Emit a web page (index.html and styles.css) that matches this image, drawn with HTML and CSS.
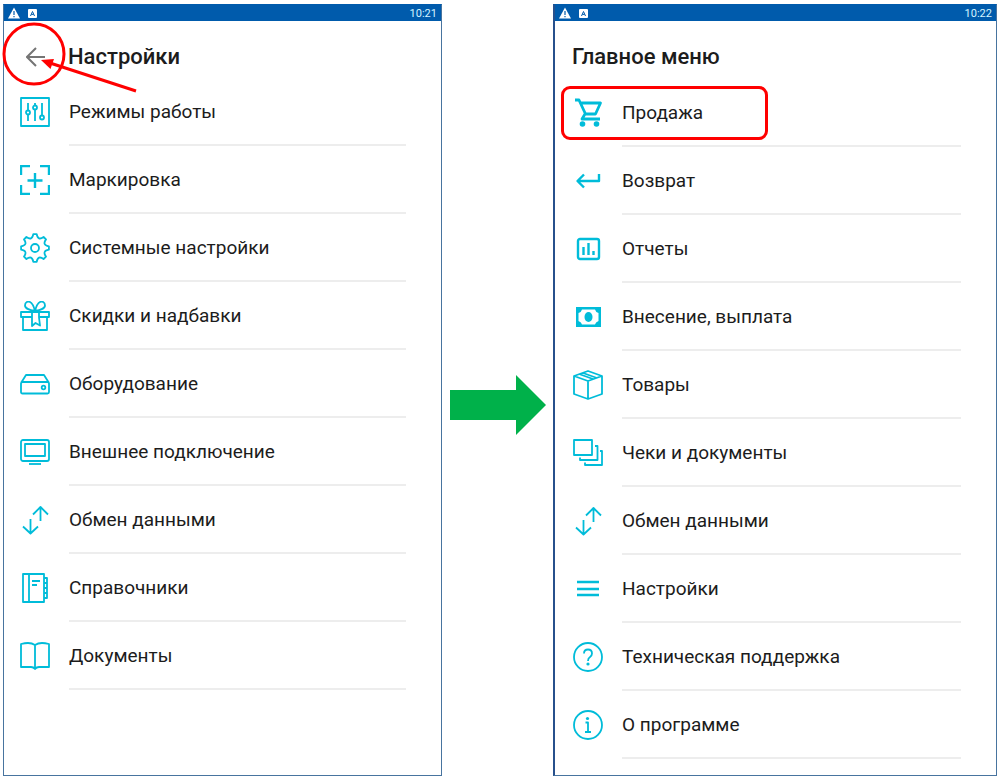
FILE: index.html
```html
<!doctype html>
<html lang="ru">
<head>
    <meta charset="UTF-8">
    <meta name="viewport" content="width=device-width, initial-scale=1.0">
    <title>Настройки - Главное меню</title>
    <link rel="stylesheet" href="styles.css">
</head>
<body>
<main class="steps">
    <section class="screen">
        <div class="statusbar">
            <svg class="warn" viewBox="0 0 12 12"><path d="M6 0.5L12 11.5H0z" fill="#fff"/><path d="M6 4v4M6 9v1.2" stroke="#005bac" stroke-width="1.2"/></svg>
            <svg class="app" viewBox="0 0 9 9"><rect width="9" height="9" rx="1" fill="#fff"/><path d="M2.5 7L4.5 2.5L6.5 7M3.3 5.4h2.4" fill="none" stroke="#005bac"/></svg>
            <time>10:21</time>
        </div>
        <header class="header">
            <button class="back" type="button" aria-label="Назад">
                <svg viewBox="0 0 20 20"><path d="M19 10H1.5M10 1L1 10l9 9" fill="none" stroke="#757575" stroke-width="2"/></svg>
            </button>
            <h1>Настройки</h1>
            <svg class="pointer" viewBox="0 0 140 70">
                <circle cx="34" cy="33" r="30" fill="none" stroke="#f00" stroke-width="3"/>
                <path d="M136 70L50 42" stroke="#f00" stroke-width="3"/>
                <path d="M41 39l13-1-3.5 10z" fill="#f00"/>
            </svg>
        </header>
        <ul class="menu">
            <li><a href="#modes">
                <svg class="icon" viewBox="0 0 30 30"><path d="M1 1h28v28H1z"/><path d="M8 6v7M8 18v6M15 6v2M15 13v11M22 6v12"/><circle cx="8" cy="15.5" r="2"/><circle cx="15" cy="10.5" r="2"/><circle cx="22" cy="20.5" r="2"/></svg>
                <span>Режимы работы</span></a></li>
            <li><a href="#marking">
                <svg class="icon bold" viewBox="0 0 30 30"><path d="M1 10V1h9M20 1h9v9M29 20v9h-9M10 29H1v-9M15 8v15M7.5 15.5h15"/></svg>
                <span>Маркировка</span></a></li>
            <li><a href="#system">
                <svg class="icon" viewBox="0 0 30 30"><circle cx="15" cy="15" r="4"/><path d="M28.9 16.7Q21.9 17.9 26 23.6L23.6 26Q17.9 21.9 16.7 28.9H13.3Q12.1 21.9 6.4 26L4 23.6Q8.1 17.9 1.1 16.7V13.3Q8.1 12.1 4 6.4L6.4 4Q12.1 8.1 13.3 1.1H16.7Q17.9 8.1 23.6 4L26 6.4Q21.9 12.1 28.9 13.3z"/></svg>
                <span>Системные настройки</span></a></li>
            <li><a href="#discounts">
                <svg class="icon" viewBox="0 0 30 30"><path d="M12 16H1v-5h28v5H19M3 16v13h24V16M12 11v14l3.5-3 4.5 2.5-1-8V11"/><path d="M15 10C10 9 5 8 5 4.5S8 0 10 1s4 5 5 9zM15 10c5-1 10-2 10-5.5S22 0 20 1s-4 5-5 9z"/></svg>
                <span>Скидки и надбавки</span></a></li>
            <li><a href="#equipment">
                <svg class="icon" viewBox="0 0 30 30"><path d="M1 14l5-8h18l5 8M2.5 13h25q1.500 0 1.500 1.500V23q0 1.500-1.500 1.500h-25Q1 24.500 1 23v-8.500Q1 13 2.500 13z"/><circle cx="23.5" cy="18.5" r="1.8"/></svg>
                <span>Оборудование</span></a></li>
            <li><a href="#external">
                <svg class="icon" viewBox="0 0 30 30"><rect x="1" y="3" width="28" height="21" rx="2"/><rect x="5" y="7" width="20" height="12"/><path d="M9 27h12"/></svg>
                <span>Внешнее подключение</span></a></li>
            <li><a href="#exchange">
                <svg class="icon" viewBox="0 0 30 30"><path d="M20.5 16V2M13 9.5L20.5 2 28 9.5M10.500 14v14.500M3 21.500l7.500 7 7.500-7"/></svg>
                <span>Обмен данными</span></a></li>
            <li><a href="#catalogs">
                <svg class="icon" viewBox="0 0 30 30"><path d="M3 1h21v28H3zM9 1v28M12 8h8M12 12h5M24 5h3v5h-3M24 10h3v5h-3M24 15h3v5h-3M24 20h3v5h-3"/></svg>
                <span>Справочники</span></a></li>
            <li><a href="#documents">
                <svg class="icon" viewBox="0 0 30 30"><path d="M15 4Q12 2 8 2q-3 0-7 1v23h10q2.500 0 4 2 1.500-2 4-2h10V3q-4-1-7-1-4 0-7 2zM15 4v23"/></svg>
                <span>Документы</span></a></li>
        </ul>
    </section>

    <svg class="next" viewBox="0 0 96 60"><path d="M0 15h66V0l30 30-30 30V45H0z" fill="#00b14a"/></svg>

    <section class="screen screen-main">
        <div class="statusbar">
            <svg class="warn" viewBox="0 0 12 12"><path d="M6 0.5L12 11.5H0z" fill="#fff"/><path d="M6 4v4M6 9v1.2" stroke="#005bac" stroke-width="1.2"/></svg>
            <svg class="app" viewBox="0 0 9 9"><rect width="9" height="9" rx="1" fill="#fff"/><path d="M2.5 7L4.5 2.5L6.5 7M3.3 5.4h2.4" fill="none" stroke="#005bac"/></svg>
            <time>10:22</time>
        </div>
        <header class="header">
            <h1>Главное меню</h1>
        </header>
        <ul class="menu">
            <li class="selected"><a href="#sale">
                <svg class="icon bold" viewBox="0 0 30 30"><path d="M2 2h4l6.5 14h10L27.5 5H7.5M12 16l-3 5h18" stroke-width="2.8"/><circle class="fill" cx="9.5" cy="26" r="2.8"/><circle class="fill" cx="23.5" cy="26" r="2.8"/></svg>
                <span>Продажа</span></a></li>
            <li><a href="#refund">
                <svg class="icon bold" viewBox="0 0 30 30"><path d="M26 8v7H5M11 8.5L4.5 15l6.500 6.500"/></svg>
                <span>Возврат</span></a></li>
            <li><a href="#reports">
                <svg class="icon bold" viewBox="0 0 30 30"><rect x="5" y="5" width="21" height="20" rx="2"/><path d="M10.5 13v8M15.5 9v12M20.5 17v4"/></svg>
                <span>Отчеты</span></a></li>
            <li><a href="#cash">
                <svg class="icon" viewBox="0 0 30 30"><path class="fill" fill-rule="evenodd" d="M3 5h25v20H3zM9 7.5Q8.5 10 5.5 11v8q3 1 3.5 3.5h13q.5-2.500 3.500-3.500v-8q-3-1-3.500-3.500z"/><ellipse class="fill" cx="15.5" cy="15" rx="4" ry="5"/></svg>
                <span>Внесение, выплата</span></a></li>
            <li><a href="#goods">
                <svg class="icon" viewBox="0 0 30 30"><path d="M15 1l14 5v18l-14 5-14-5V6zM1 6l14 5 14-5M15 11v18M6 4l14 5M10 3l14 5"/></svg>
                <span>Товары</span></a></li>
            <li><a href="#receipts">
                <svg class="icon" viewBox="0 0 30 30"><path d="M1 2h18v15H1zM22 8h2.5v14H7v-2.5M27 13h2v14H12v-2.5"/></svg>
                <span>Чеки и документы</span></a></li>
            <li><a href="#sync">
                <svg class="icon" viewBox="0 0 30 30"><path d="M20.5 16V2M13 9.5L20.5 2 28 9.5M10.500 14v14.500M3 21.500l7.500 7 7.500-7"/></svg>
                <span>Обмен данными</span></a></li>
            <li><a href="#settings">
                <svg class="icon bold" viewBox="0 0 30 30"><path d="M4 8h22M4 15h22M4 21h22"/></svg>
                <span>Настройки</span></a></li>
            <li><a href="#support">
                <svg class="icon" viewBox="0 0 30 30"><circle cx="15" cy="15" r="14"/><path d="M11 11.5Q11 7.500 15 7.500t4 4q0 2-2 3.500-2 1.300-2 4"/><circle class="fill" cx="15" cy="22" r="1.6"/></svg>
                <span>Техническая поддержка</span></a></li>
            <li><a href="#about">
                <svg class="icon" viewBox="0 0 30 30"><circle cx="15" cy="15" r="14"/><path d="M12.5 12.5H15V22M12 22h6"/><circle class="fill" cx="14.5" cy="8.5" r="1.6"/></svg>
                <span>О программе</span></a></li>
        </ul>
    </section>
</main>
</body>
</html>
```
FILE: styles.css
```css
* {
    box-sizing: border-box;
}
body {
    margin: 0;
    background-color: #fff;
    font-family: Roboto, "Noto Sans", sans-serif;
    color: #1c1c1c;
}
.steps {
    display: grid;
    grid-template-columns: 439fr 111px 444fr;
    min-height: 100vh;
    padding: 4px 3px;
}
.screen {
    border: 1px solid #48749f;
    border-top-color: #005bac;
}
.screen-main {
    border-left: 2px solid #27508c;
}
.statusbar {
    display: flex;
    align-items: center;
    gap: 8px;
    height: 16px;
    padding: 0 4px;
    background-color: #005bac;
}
.statusbar .warn {
    width: 12px;
    height: 12px;
}
.statusbar .app {
    width: 9px;
    height: 9px;
}
.statusbar time {
    margin-left: auto;
    font-size: 11px;
    color: #d4f4ff;
}
.header {
    position: relative;
    display: flex;
    align-items: center;
    height: 57px;
    padding: 14px 0 0 17px;
}
.header h1 {
    margin: 0;
    font-size: 22px;
    line-height: 28px;
    font-weight: 500;
}
.back {
    display: flex;
    justify-content: center;
    width: 30px;
    margin-right: 17px;
    padding: 0;
    border: none;
    background: none;
}
.back svg {
    width: 20px;
    height: 20px;
}
/* red hint drawn over the back button */
.pointer {
    position: absolute;
    top: 0;
    left: -4px;
    width: 140px;
    height: 70px;
    overflow: visible;
    pointer-events: none;
}
.menu {
    margin: 0;
    padding: 0;
    list-style: none;
}
.screen-main .menu {
    padding-top: 1px;
}
.menu li {
    position: relative;
}
.menu a {
    display: flex;
    align-items: center;
    gap: 19px;
    padding: 0 35px 0 16px;
    color: inherit;
    text-decoration: none;
}
.screen-main .menu a {
    padding-left: 18px;
}
.menu span {
    flex: 1;
    height: 68px;
    border-bottom: 2px solid #ededed;
    font-size: 19px;
    line-height: 68px;
    white-space: nowrap;
}
.icon {
    width: 30px;
    height: 30px;
    fill: none;
    stroke: #00bcd9;
    stroke-width: 1.8;
    stroke-linejoin: round;
}
.icon.bold {
    stroke-width: 2.4;
}
.icon .fill {
    fill: #00bcd9;
    stroke: none;
}
.selected::after {
    content: "";
    box-sizing: border-box;
    position: absolute;
    top: 7px;
    left: 6px;
    width: 207px;
    height: 54px;
    border: 3px solid #f00;
    border-radius: 9px;
    pointer-events: none;
}
.next {
    align-self: center;
    justify-self: center;
    width: 96px;
    height: 60px;
    margin-top: 30px;
}
```
